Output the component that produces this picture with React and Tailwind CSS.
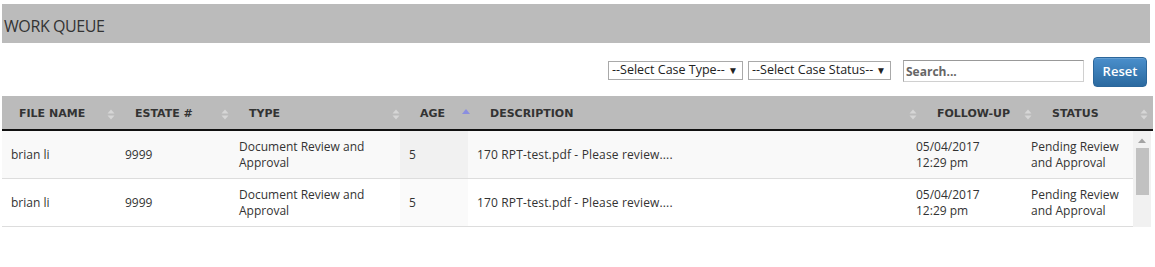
import React from "react";

const SortIcon = ({ active }) =>
  active ? (
    <svg width="8" height="11" viewBox="0 0 8 11">
      <path d="M0 5 L4 0 L8 5 Z" fill="#8a8ee0" />
    </svg>
  ) : (
    <svg width="8" height="11" viewBox="0 0 8 11">
      <path d="M0.5 4.5 L4 0.5 L7.5 4.5 Z" fill="#d6d6d6" />
      <path d="M0.5 6.5 L4 10.5 L7.5 6.5 Z" fill="#d6d6d6" />
    </svg>
  );

const headCols = [
  { label: "FILE NAME", w: "w-[116px]" },
  { label: "ESTATE #", w: "w-[114px]" },
  { label: "TYPE", w: "w-[171px]" },
  { label: "AGE", w: "w-[70px]", active: true },
  { label: "DESCRIPTION", w: "w-[447px]" },
  { label: "FOLLOW-UP", w: "w-[115px]" },
  { label: "STATUS", w: "w-[116px]" },
];

const rows = [
  {
    name: "brian li",
    estate: "9999",
    type: ["Document Review and", "Approval"],
    age: "5",
    desc: "170 RPT-test.pdf - Please review....",
    follow: ["05/04/2017", "12:29 pm"],
    status: ["Pending Review", "and Approval"],
  },
  {
    name: "brian li",
    estate: "9999",
    type: ["Document Review and", "Approval"],
    age: "5",
    desc: "170 RPT-test.pdf - Please review....",
    follow: ["05/04/2017", "12:29 pm"],
    status: ["Pending Review", "and Approval"],
  },
];

const Lines = ({ lines }) => (
  <div>
    {lines.map((l) => (
      <div key={l}>{l}</div>
    ))}
  </div>
);

export default function App() {
  return (
    <div className="w-[1155px] h-[267px] bg-white font-['Open_Sans',sans-serif] text-[#333] overflow-hidden">
      {/* title bar */}
      <div className="pt-[4px] px-[2px] pr-[5px]">
        <div className="h-[39px] bg-[#bbbbbb] flex items-center pl-[2px] pt-[4px] text-[16px] text-[#333] tracking-[-0.4px]">
          WORK QUEUE
        </div>
      </div>

      {/* filters */}
      <div className="h-[53px] flex items-start justify-end pt-[14px] pr-[8px]">
        <div className="mt-[4px] h-[19px] w-[135px] border border-[#a9a9a9] flex items-center justify-between pl-[3px] pr-[4px] text-[12.5px] text-[#222]">
          <span>--Select Case Type--</span>
          <span className="text-[10px]">▼</span>
        </div>
        <div className="ml-[5px] mt-[4px] h-[19px] w-[143px] border border-[#a9a9a9] flex items-center justify-between pl-[3px] pr-[4px] text-[12.5px] text-[#222]">
          <span>--Select Case Status--</span>
          <span className="text-[10px]">▼</span>
        </div>
        <input
          className="ml-[12px] mt-[3px] h-[22px] w-[181px] border border-[#d0d0d0] border-t-[#999] border-l-[#aaa] px-[2px] text-[12px] font-bold outline-none placeholder:text-[#666]"
          placeholder="Search..."
        />
        <button className="ml-[9px] h-[30px] w-[54px] rounded-[4px] border border-[#2b669a] bg-gradient-to-b from-[#4a8fcc] to-[#2b6aa0] text-white text-[13px] font-semibold shadow-[inset_0_1px_0_rgba(255,255,255,0.15)]">
          Reset
        </button>
      </div>

      {/* table header */}
      <div className="mx-[2px] h-[35px] flex bg-[#bbbbbb] border-b-2 border-[#111]">
        {headCols.map((c) => (
          <div
            key={c.label}
            className={`${c.w} shrink-0 flex items-center justify-between pl-[17px] pr-[3px] pt-[3px] font-['DejaVu_Sans',sans-serif] font-bold text-[11px] text-[#333]`}
          >
            <span>{c.label}</span>
            <SortIcon active={c.active} />
          </div>
        ))}
      </div>

      {/* table body */}
      <div className="mx-[2px] flex">
        <div className="w-[1131px] text-[12px] leading-[16px] text-[#333]">
          {rows.map((r, i) => (
            <div
              key={i}
              className={`h-[48px] flex border-b border-[#dddddd] ${
                i % 2 === 0 ? "bg-[#f9f9f9]" : "bg-white"
              }`}
            >
              <div className="w-[114px] shrink-0 flex items-center pl-[9px]">{r.name}</div>
              <div className="w-[114px] shrink-0 flex items-center pl-[9px]">{r.estate}</div>
              <div className="w-[170px] shrink-0 flex items-center pl-[9px]">
                <Lines lines={r.type} />
              </div>
              <div
                className={`w-[68px] shrink-0 flex items-center pl-[9px] ${
                  i % 2 === 0 ? "bg-[#f1f1f1]" : "bg-[#fafafa]"
                }`}
              >
                {r.age}
              </div>
              <div className="w-[439px] shrink-0 flex items-center pl-[9px] tracking-[0.15px]">{r.desc}</div>
              <div className="w-[115px] shrink-0 flex items-center pl-[9px]">
                <Lines lines={r.follow} />
              </div>
              <div className="w-[111px] shrink-0 flex items-center pl-[9px]">
                <Lines lines={r.status} />
              </div>
            </div>
          ))}
        </div>

        {/* scrollbar */}
        <div className="w-[18px] h-[96px] bg-[#f1f1f1] flex flex-col items-center">
          <svg width="8" height="5" viewBox="0 0 8 5" className="mt-[7px]">
            <path d="M0 5 L4 0.5 L8 5 Z" fill="#a3a3a3" />
          </svg>
          <div className="mt-[5px] w-[13px] h-[47px] bg-[#c1c1c1]" />
        </div>
      </div>
    </div>
  );
}
